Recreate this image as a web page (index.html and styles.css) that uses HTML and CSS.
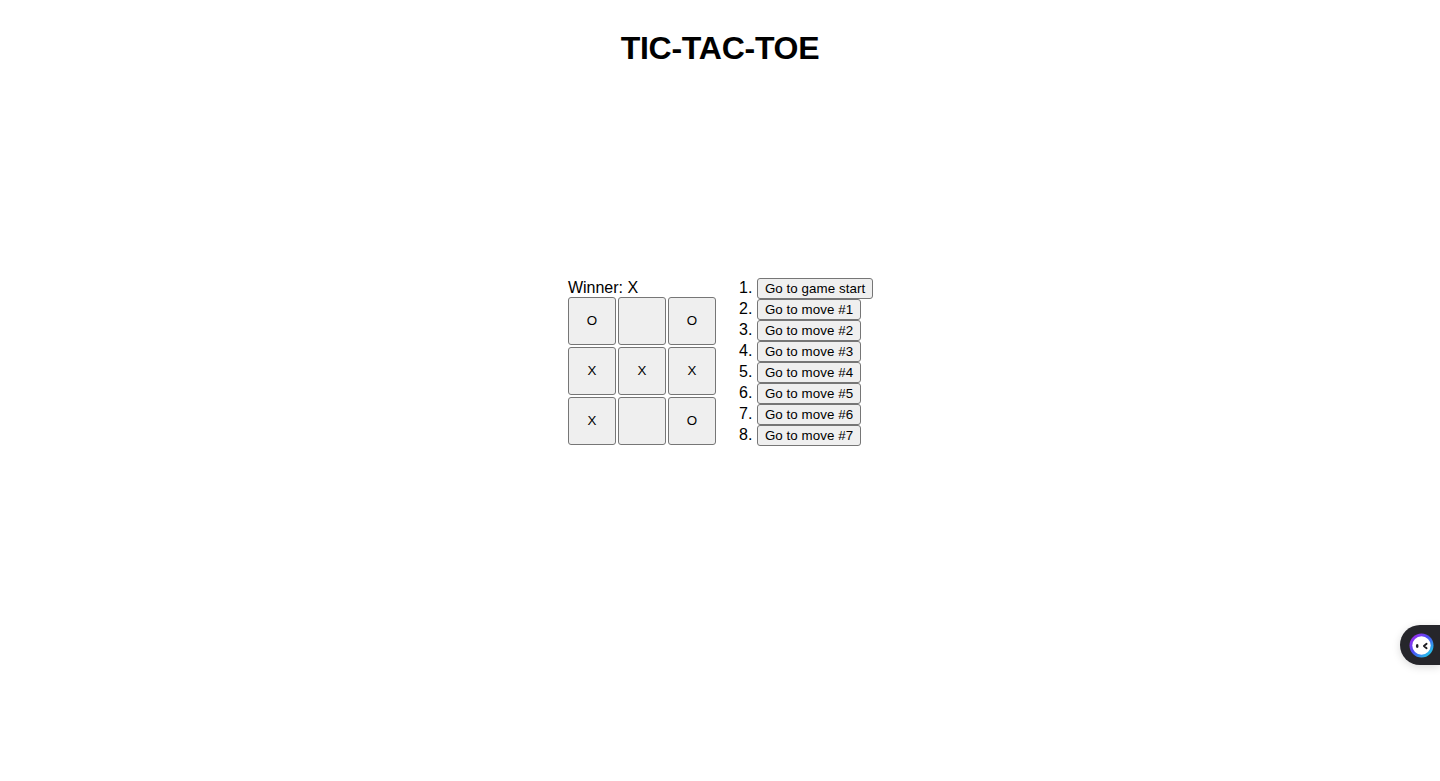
FILE: index.html
```html
<!DOCTYPE html>
<html lang="en">
<head>
<meta charset="utf-8">
<title>Tic-Tac-Toe</title>
<link rel="stylesheet" href="styles.css">
</head>
<body>
<h1 class="title">TIC-TAC-TOE</h1>
<main class="game">
  <section class="board">
    <div class="status">Winner: X</div>
    <div class="row">
      <button class="square">O</button><button class="square"></button><button class="square">O</button>
    </div>
    <div class="row">
      <button class="square">X</button><button class="square">X</button><button class="square">X</button>
    </div>
    <div class="row">
      <button class="square">X</button><button class="square"></button><button class="square">O</button>
    </div>
  </section>
  <ol class="moves">
    <li><button class="move">Go to game start</button></li>
    <li><button class="move">Go to move #1</button></li>
    <li><button class="move">Go to move #2</button></li>
    <li><button class="move">Go to move #3</button></li>
    <li><button class="move">Go to move #4</button></li>
    <li><button class="move">Go to move #5</button></li>
    <li><button class="move">Go to move #6</button></li>
    <li><button class="move">Go to move #7</button></li>
  </ol>
</main>
<aside class="widget" aria-label="Assistant">
  <svg class="widget-icon" viewBox="0 0 25 25" width="25" height="25" aria-hidden="true">
    <defs>
      <linearGradient id="ring" x1="0.1" y1="0.1" x2="0.9" y2="0.9">
        <stop offset="0" stop-color="#a02bec"/>
        <stop offset="0.45" stop-color="#4a4df5"/>
        <stop offset="1" stop-color="#1fd0ea"/>
      </linearGradient>
    </defs>
    <circle cx="12.5" cy="12.5" r="12" fill="url(#ring)"/>
    <circle cx="12.5" cy="12.5" r="9.2" fill="#fff"/>
    <ellipse cx="8.2" cy="13" rx="1.3" ry="2.1" fill="#1d1d22"/>
    <path d="M17.6 10.8 L14.9 13 L17.6 15.2" fill="none" stroke="#1d1d22" stroke-width="1.9" stroke-linecap="round" stroke-linejoin="round"/>
  </svg>
</aside>
</body>
</html>
```
FILE: styles.css
```css
html, body {
  margin: 0;
  padding: 0;
}
body {
  font-family: "Liberation Sans", Arial, sans-serif;
  font-size: 16px;
  color: #000;
  background: #fff;
  min-height: 781px;
  overflow: hidden;
}
.title {
  margin: 0;
  padding-top: 29px;
  font-size: 32px;
  font-weight: 700;
  line-height: 39px;
  letter-spacing: -0.25px;
  text-align: center;
}
.game {
  display: flex;
  justify-content: center;
  margin-top: 210px;
  padding-left: 1.2px;
}
.status {
  line-height: 19px;
}
.board {
  width: 149px;
}
.row {
  display: flex;
  gap: 2px;
  margin-bottom: 2px;
}
.square {
  width: 48px;
  height: 48px;
  padding: 0 0 2px;
  box-sizing: border-box;
  font: 400 13.333px "Liberation Sans", Arial, sans-serif;
  color: #000;
  background: #efefef;
  border: 1px solid #767676;
  border-radius: 3px;
}
.moves {
  margin: 0;
  padding-left: 40px;
}
.moves li {
  height: 21px;
  line-height: 19px;
}
.move {
  height: 21px;
  padding: 1px 7px;
  box-sizing: border-box;
  font: 400 13.333px "Liberation Sans", Arial, sans-serif;
  letter-spacing: 0.07px;
  color: #000;
  background: #efefef;
  border: 1px solid #767676;
  border-radius: 3px;
}
.widget {
  position: fixed;
  right: 0;
  top: 625px;
  width: 40px;
  height: 40px;
  display: flex;
  align-items: center;
  padding-left: 9px;
  box-sizing: border-box;
  background: #26262b;
  border-radius: 20px 0 0 20px;
  box-shadow: 0 2px 8px rgba(0, 0, 0, 0.15);
}
.widget-icon {
  display: block;
}
```
